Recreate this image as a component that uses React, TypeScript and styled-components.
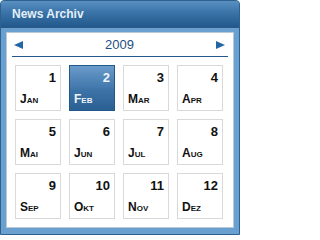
import { FC, useState } from "react";
import styled, { createGlobalStyle } from "styled-components";

const GlobalStyle = createGlobalStyle`
  html, body {
    margin: 0;
    padding: 0;
    background: #ffffff;
    font-family: "Liberation Sans", Arial, sans-serif;
  }
`;

const months = ["Jan", "Feb", "Mar", "Apr", "Mai", "Jun", "Jul", "Aug", "Sep", "Okt", "Nov", "Dez"];

const Panel = styled.div`
  width: 240px;
  height: 235px;
  box-sizing: border-box;
  border: 1px solid #2f6190;
  border-radius: 4px 4px 0 0;
  background: #69a0d0;
  display: flex;
  flex-direction: column;
  overflow: hidden;
`;

const Header = styled.div`
  height: 26px;
  flex: none;
  display: flex;
  align-items: center;
  padding-left: 11px;
  background: linear-gradient(to bottom, #5a90c2 0%, #3a73a8 45%, #22598c 100%);
  border-bottom: 1px solid #2a5b88;
  color: #e4eef8;
  font-size: 12px;
  font-weight: bold;
`;

const Body = styled.div`
  flex: 1;
  padding: 4px 5px 6px 5px;
  display: flex;
`;

const Box = styled.div`
  flex: 1;
  background: #ffffff;
  border: 1px solid #b9c9d8;
  padding: 0 5px 0 5px;
`;

const Nav = styled.div`
  height: 23px;
  display: flex;
  align-items: center;
  justify-content: space-between;
  padding: 0 3px 0 2px;
  border-bottom: 1px solid #22598c;
`;

const Year = styled.span`
  color: #1f4f82;
  font-size: 13px;
`;

const Arrow = styled.button`
  border: 0;
  padding: 0;
  background: none;
  display: flex;
  cursor: pointer;
`;

const Grid = styled.div`
  display: grid;
  grid-template-columns: repeat(4, 46px);
  grid-auto-rows: 46px;
  gap: 8px;
  padding: 8px 2px 0 3px;
`;

const Cell = styled.div<{ active: boolean }>`
  box-sizing: border-box;
  display: flex;
  flex-direction: column;
  justify-content: space-between;
  padding: 4px 4px 4px 4px;
  border: 1px solid ${({ active }) => (active ? "#23588a" : "#d9d9d9")};
  background: ${({ active }) => (active ? "linear-gradient(to bottom, #6a9bcb 0%, #3d74a8 55%, #2a5f92 100%)" : "#ffffff")};
  color: ${({ active }) => (active ? "#eef4fa" : "#111111")};
  cursor: pointer;
`;

const Num = styled.span`
  align-self: flex-end;
  font-size: 13px;
  font-weight: bold;
  line-height: 15px;
`;

const Month = styled.span`
  font-size: 12px;
  font-weight: bold;
  font-variant: small-caps;
  line-height: 13px;
`;

const Triangle: FC<{ dir: "left" | "right" }> = ({ dir }) => (
  <svg width="9" height="8" viewBox="0 0 9 8">
    <path d={dir === "left" ? "M0 4L9 0V8Z" : "M9 4L0 0V8Z"} fill="#2466a4" />
  </svg>
);

const App: FC = () => {
  const [selected, setSelected] = useState<number>(1);
  return (
    <>
      <GlobalStyle />
      <Panel>
        <Header>News Archiv</Header>
        <Body>
          <Box>
            <Nav>
              <Arrow aria-label="prev">
                <Triangle dir="left" />
              </Arrow>
              <Year>2009</Year>
              <Arrow aria-label="next">
                <Triangle dir="right" />
              </Arrow>
            </Nav>
            <Grid>
              {months.map((m, i) => (
                <Cell key={m} active={i === selected} onClick={() => setSelected(i)}>
                  <Num>{i + 1}</Num>
                  <Month>{m}</Month>
                </Cell>
              ))}
            </Grid>
          </Box>
        </Body>
      </Panel>
    </>
  );
};

export default App;
